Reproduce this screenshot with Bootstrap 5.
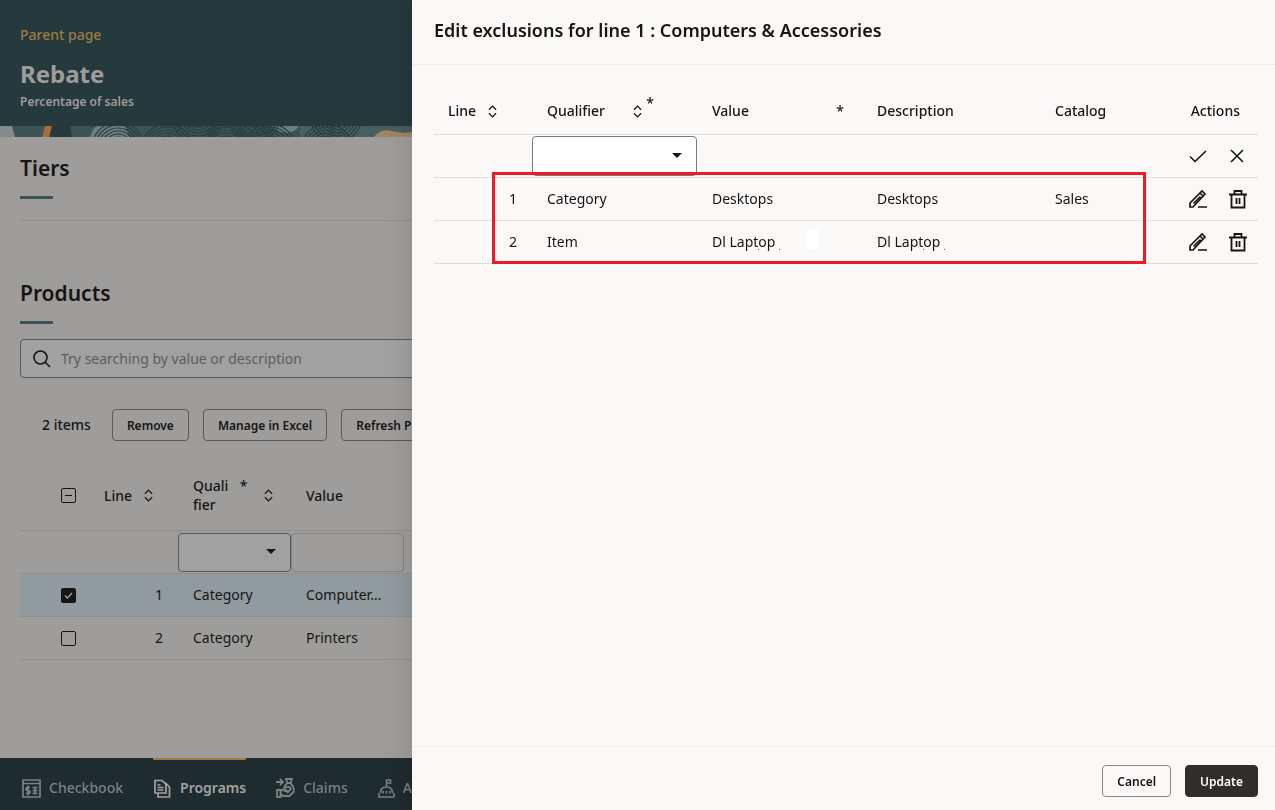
<!DOCTYPE html>
<html lang="en">
<head>
<meta charset="utf-8">
<meta name="viewport" content="width=device-width, initial-scale=1">
<title>Rebate</title>
<link rel="stylesheet" href="https://cdn.jsdelivr.net/npm/bootstrap@5.3.0/dist/css/bootstrap.min.css">
<style>
  body { font-family: "Noto Sans", "Open Sans", sans-serif; font-size: 14px; line-height: 20px; color: #161513; background: #9f9d9b; }
  .icon { fill: none; stroke: currentColor; flex: none; display: block; }
  .side-pad { padding-left: 20px; padding-right: 20px; }

  /* Page behind the drawer */
  .page-head { background: #26393c; color: #9f9d9b; padding-top: 25px; padding-bottom: 16px; }
  .parent-link { color: #9c7c46; font-weight: 500; text-decoration: none; }
  .page-title { margin: 13px 0 4px; font-size: 24px; line-height: 32px; font-weight: 700; }
  .page-sub { font-size: 12px; line-height: 16px; font-weight: 600; }
  .art { display: block; width: 100%; height: 11px; background: #3b5353; }
  .page-body { padding-top: 17px; }
  .section-title { margin: 0; font-size: 21px; line-height: 28px; font-weight: 600; }
  .section-title::after { content: ""; display: block; width: 33px; height: 3px; margin-top: 14px; background: #3b5353; }
  .rule { height: 1px; margin: 21px 0 58px; background: #918f8d; }
  .search-box { height: 39px; margin-top: 15px; padding-left: 12px; border: 1px solid #5a5957; border-radius: 4px; background: #a1a1a1; }
  .search-box input { margin-left: 10px; padding: 0; border: 0; outline: 0; background: none; color: #161513; }
  .search-box input::placeholder { color: #5e5d5b; opacity: 1; }
  .toolbar { gap: 14px; margin-top: 31px; padding-left: 22px; }
  .item-count { margin-right: 7px; font-weight: 500; white-space: nowrap; }
  .btn-line { --bs-btn-border-color: #5a5957; --bs-btn-color: #161513; --bs-btn-border-radius: 4px; height: 32px; padding: 1px 14px 0; font-size: 12px; line-height: 20px; font-weight: 600; white-space: nowrap; flex: none; }

  .grid { table-layout: fixed; width: 100%; border-collapse: separate; border-spacing: 0; }
  .grid th { font-weight: 500; }
  .grid th, .grid td { padding: 0 15px; border-bottom: 1px solid #918f8d; white-space: nowrap; vertical-align: middle; }
  .grid td { height: 43px; }
  .page-grid { margin-top: 19px; }
  .page-grid thead th { height: 71px; line-height: 19px; }
  .page-grid .pick-cell { padding: 0 0 0 41px; }
  .grid .line-head { padding: 0 0 0 14px; }
  .grid .field-cell { padding: 0; }
  .grid .starred { padding-right: 18px; }
  .picked { background: #919a9e; }
  .two-line { white-space: normal; width: 38px; }
  .field { appearance: none; display: block; width: 100%; height: 39px; border: 1px solid #5a5957; border-radius: 4px; background: #a1a1a1; }
  .field.quiet { border-color: #858381; background: transparent; }
  .has-caret::after { content: ""; position: absolute; right: 15px; top: 50%; margin-top: -3px; border: 5px solid transparent; border-top-color: #161513; border-bottom: 0; pointer-events: none; }
  .tick { appearance: none; display: block; width: 15px; height: 15px; margin: 0; border: 1px solid #161513; border-radius: 2px; background: center / 13px 13px no-repeat; }
  .tick:indeterminate { background-image: linear-gradient(#161513, #161513); background-size: 7px 1px; }
  .tick:checked { background-color: #161513; background-image: url("data:image/svg+xml,%3Csvg xmlns='http://www.w3.org/2000/svg' viewBox='0 0 13 13'%3E%3Cpath d='M3 6.5l2.5 2.5L10 4' fill='none' stroke='%239f9d9b' stroke-width='1.5'/%3E%3C/svg%3E"); }

  .tab-strip { height: 52px; gap: 30px; padding-left: 22px; background: #1e2b2f; font-weight: 500; }
  .tab-strip a { gap: 8px; padding-top: 6px; color: #7c8180; text-decoration: none; border-top: 2px solid transparent; }
  .tab-strip a.current { color: #a3a2a0; border-top-color: #9c7c46; font-weight: 600; }

  /* Drawer */
  .drawer { --bs-offcanvas-bg: #fbf9f8; --bs-offcanvas-color: #161513; --bs-offcanvas-width: calc(100% - 412px); --bs-offcanvas-border-width: 0; box-shadow: 0 0 28px rgba(0, 0, 0, .14); }
  .drawer-head { height: 65px; padding: 0 22px 4px; border-bottom: 1px solid #f1efed; }
  .drawer-title { margin: 0; font-size: 18px; line-height: 28px; font-weight: 600; }
  .drawer-body { padding: 23px 17px 0 22px; }
  .drawer .grid th, .drawer .grid td { border-bottom-color: #dfdddb; }
  .drawer thead th { height: 47px; }
  .drawer .field { height: 40px; background: #fff; border-color: #7d7b79; }
  .sort-star { margin-right: 28px; padding-bottom: 16px; }
  .drawer-foot { gap: 14px; height: 64px; padding: 5px 17px 0; border-top: 1px solid #f1efed; }
  .drawer .btn-line { --bs-btn-border-color: #8a8886; }
  .drawer .btn-solid { --bs-btn-bg: #312d2a; --bs-btn-border-color: #312d2a; --bs-btn-color: #fff; }
  .grid .action-cell { padding: 0 10px 0 0; }
  .action-cell > div { gap: 20px; }
  .grid .action-head { padding-right: 18px; }
  .row-btn { padding: 0; border: 0; background: none; color: inherit; }
  .outline-box { position: absolute; left: 58px; right: 112px; bottom: 0; height: 92px; border: 3px solid #ed1c24; pointer-events: none; }
  .patch { position: absolute; right: 44px; top: 8px; width: 11px; height: 20px; background: #fff; }
  .speck { position: absolute; left: 61px; top: 28px; width: 22px; height: 1px; border: solid #555; border-width: 0 1px; }
</style>
</head>
<body>
<svg class="d-none" aria-hidden="true">
  <symbol id="sort" viewBox="0 0 10 14"><path d="M1 5l4-4 4 4M1 9l4 4 4-4" stroke-width="1.4"/></symbol>
  <symbol id="pencil" viewBox="0 0 20 20"><path d="M2 18v-4L14 2l3 3L5 18zM12 4l3 3M10 18h9M5.500 14.500l7-7" stroke-width="1.7"/></symbol>
  <symbol id="trash" viewBox="0 0 20 20"><path d="M1 5.500h18M3.500 5.500V18.500h13V5.500M6.500 5V2h7v3M8.500 9v6M11.500 9v6" stroke-width="1.8"/></symbol>
</svg>

<div class="d-flex flex-column vh-100 overflow-hidden">
  <header class="page-head side-pad">
    <a class="parent-link d-block" href="#">Parent page</a>
    <h1 class="page-title">Rebate</h1>
    <div class="page-sub">Percentage of sales</div>
  </header>
  <svg class="art flex-shrink-0" aria-hidden="true"></svg>

  <main class="page-body side-pad flex-grow-1">
    <section>
      <h2 class="section-title">Tiers</h2>
      <div class="rule"></div>
    </section>
    <section>
      <h2 class="section-title">Products</h2>
      <div class="search-box d-flex align-items-center">
        <svg class="icon" width="18" height="18" viewBox="0 0 18 18" stroke-width="1.6" aria-hidden="true"><circle cx="7.500" cy="7.500" r="6.500"/><path d="M12 12l5 5"/></svg>
        <input class="flex-grow-1" type="search" aria-label="Search products" placeholder="Try searching by value or description">
      </div>
      <div class="toolbar d-flex align-items-center">
        <span class="item-count">2 items</span>
        <button class="btn btn-line" type="button">Remove</button>
        <button class="btn btn-line" type="button">Manage in Excel</button>
        <button class="btn btn-line" type="button">Refresh Pr</button>
      </div>
      <table class="grid page-grid">
        <colgroup><col style="width:70px"><col style="width:88px"><col style="width:113px"><col style="width:113px"><col></colgroup>
        <thead>
          <tr>
            <th class="pick-cell"><input class="tick" id="pick-all" type="checkbox" aria-label="Select all"></th>
            <th class="line-head"><span class="d-flex align-items-center gap-2">Line <svg class="icon ms-1" width="9" height="13"><use href="#sort"/></svg></span></th>
            <th class="starred"><span class="d-flex align-items-center justify-content-between"><span class="two-line">Quali fier</span><span class="align-self-start">*</span><svg class="icon ms-2" width="9" height="13"><use href="#sort"/></svg></span></th>
            <th>Value</th>
            <th></th>
          </tr>
        </thead>
        <tbody>
          <tr>
            <td></td>
            <td></td>
            <td class="field-cell"><div class="position-relative has-caret"><select class="field" aria-label="Qualifier"></select></div></td>
            <td class="field-cell"><input class="field quiet" type="text" aria-label="Value"></td>
            <td></td>
          </tr>
          <tr class="picked">
            <td class="pick-cell"><input class="tick" type="checkbox" aria-label="Select line 1" checked></td>
            <td class="text-end">1</td><td>Category</td><td>Computer…</td><td></td>
          </tr>
          <tr>
            <td class="pick-cell"><input class="tick" type="checkbox" aria-label="Select line 2"></td>
            <td class="text-end">2</td><td>Category</td><td>Printers</td><td></td>
          </tr>
        </tbody>
      </table>
    </section>
  </main>

  <nav class="tab-strip d-flex flex-shrink-0">
    <a class="d-flex align-items-center" href="#"><svg class="icon" width="19" height="19" viewBox="0 0 19 19" stroke-width="1.700" aria-hidden="true"><path d="M1 1h17v17H1zM1 4.500h17M8 8.500H5.500a1.500 1.500 0 0 0 0 3h1a1.500 1.500 0 0 1 0 3H4M6 6.500v10M10.500 8.500h5M10.500 11.500h5M10.500 14.500h5M13 8v7"/></svg>Checkbook</a>
    <a class="current d-flex align-items-center" href="#"><svg class="icon" width="19" height="19" viewBox="0 0 19 19" stroke-width="1.700" aria-hidden="true"><path d="M2 1.500h7l4 4V14H2zM5 14v4h11.500V8L12 3.500M4.500 6h3M4.500 8.500h6M4.500 11h6"/></svg>Programs</a>
    <a class="d-flex align-items-center" href="#"><svg class="icon" width="19" height="20" viewBox="0 0 19 20" stroke-width="1.800" aria-hidden="true"><path d="M0 4h7M4 1l3 3-3 3M10 1h6l-1.500 4h-3zM11.500 5C8 8 8 10 8 11M14.500 5c3 3 4 6 3 9l-4 4H7l-2-2M1 12h3.500v7H1zM5 13c3-3 5-1 6 0h-3M11 15l4-4c0-2-4-3-5-1"/></svg>Claims</a>
    <a class="d-flex align-items-center" href="#"><svg class="icon" width="17" height="19" viewBox="0 0 17 19" stroke-width="1.600" aria-hidden="true"><path d="M8.500 8V1h4v3h-4M2.500 14C2.500 9.500 5 8 8.500 8s6 1.500 6 6M1 14v4h15v-4M5 12v2.500M8.500 12v2.500M12 12v2.500"/></svg>A</a>
  </nav>
</div>

<aside class="drawer offcanvas offcanvas-end show" data-bs-backdrop="false" tabindex="-1" aria-labelledby="drawer-title">
  <header class="drawer-head d-flex align-items-center">
    <h2 class="drawer-title" id="drawer-title">Edit exclusions for line 1 : Computers &amp; Accessories</h2>
  </header>
  <div class="drawer-body flex-grow-1">
    <div class="position-relative">
      <table class="grid">
        <colgroup><col style="width:98px"><col style="width:165px"><col style="width:165px"><col style="width:178px"><col><col style="width:98px"></colgroup>
        <thead>
          <tr>
            <th class="line-head"><span class="d-flex align-items-center gap-2">Line <svg class="icon ms-1" width="9" height="13"><use href="#sort"/></svg></span></th>
            <th><span class="d-flex align-items-center">Qualifier <svg class="icon ms-auto" width="9" height="13"><use href="#sort"/></svg><span class="ms-1 sort-star">*</span></span></th>
            <th class="starred"><span class="d-flex justify-content-between">Value <span>*</span></span></th>
            <th>Description</th>
            <th>Catalog</th>
            <th class="action-head text-end">Actions</th>
          </tr>
        </thead>
        <tbody>
          <tr>
            <td></td>
            <td class="field-cell"><div class="position-relative has-caret"><select class="field" aria-label="Exclusion qualifier"></select></div></td>
            <td></td><td></td><td></td>
            <td class="action-cell"><div class="d-flex justify-content-end">
              <button class="row-btn" type="button" aria-label="Save row"><svg class="icon" width="20" height="20" viewBox="0 0 20 20" stroke-width="1.600"><path d="M2 10.500l5 5L18 5"/></svg></button>
              <button class="row-btn" type="button" aria-label="Discard row"><svg class="icon" width="20" height="20" viewBox="0 0 20 20" stroke-width="1.600"><path d="M3 4l12 12M15 4L3 16"/></svg></button>
            </div></td>
          </tr>
          <tr>
            <td class="text-end">1</td><td>Category</td><td>Desktops</td><td>Desktops</td><td>Sales</td>
            <td class="action-cell"><div class="d-flex justify-content-end">
              <button class="row-btn" type="button" aria-label="Edit line 1"><svg class="icon" width="20" height="20"><use href="#pencil"/></svg></button>
              <button class="row-btn" type="button" aria-label="Delete line 1"><svg class="icon" width="20" height="20"><use href="#trash"/></svg></button>
            </div></td>
          </tr>
          <tr>
            <td class="text-end">2</td><td>Item</td><td class="position-relative">Dl Laptop<span class="speck"></span><span class="patch"></span></td><td class="position-relative">Dl Laptop<span class="speck"></span></td><td></td>
            <td class="action-cell"><div class="d-flex justify-content-end">
              <button class="row-btn" type="button" aria-label="Edit line 2"><svg class="icon" width="20" height="20"><use href="#pencil"/></svg></button>
              <button class="row-btn" type="button" aria-label="Delete line 2"><svg class="icon" width="20" height="20"><use href="#trash"/></svg></button>
            </div></td>
          </tr>
        </tbody>
      </table>
      <div class="outline-box"></div>
    </div>
  </div>
  <footer class="drawer-foot d-flex align-items-center justify-content-end">
    <button class="btn btn-line" type="button">Cancel</button>
    <button class="btn btn-line btn-solid" type="button">Update</button>
  </footer>
</aside>

<script src="https://cdn.jsdelivr.net/npm/bootstrap@5.3.0/dist/js/bootstrap.bundle.min.js"></script>
<script>
  document.getElementById('pick-all').indeterminate = true;

  // Decorative strip under the page header: solid shapes plus groups of concentric rings
  const shapes = [
    ['M0 0H12L15 11H0z', '#858a8c'], ['M45 0H52L49 11H42z', '#a66c38'],
    ['M52 0H70L72 11H50z', '#26393c'], ['M90 11Q92 3 97 0H125L129 11z', '#6b7f7e'],
    ['M272 0H299Q294 7 286 7 279 7 272 0z', '#6b7f7e'], ['M300 0H412V11H300z', '#485f5e'],
    ['M374 11Q381 2 392 5T412 6V11z', '#9f8562']
  ];
  const rings = [[118, 22], [167, 24], [198, -10], [226, 24], [254, -10], [270, 24], [327, 24], [336, -10]];
  let art = shapes.map(([d, fill]) => `<path d="${d}" fill="${fill}"/>`).join('');
  for (const [x, y] of rings) {
    for (let r = 8; r <= 27; r += 3) art += `<circle cx="${x}" cy="${y}" r="${r}" fill="none" stroke="#263f41" stroke-width="1.2"/>`;
  }
  document.querySelector('.art').innerHTML = art;
</script>
</body>
</html>
